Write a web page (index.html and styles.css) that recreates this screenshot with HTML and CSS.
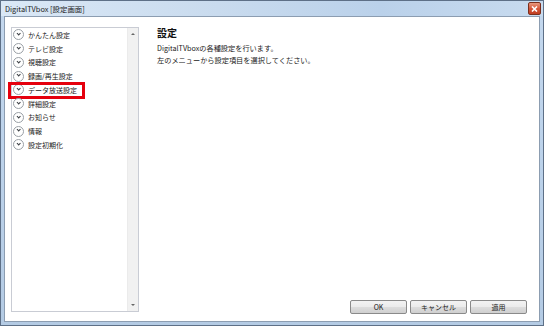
FILE: index.html
```html
<!DOCTYPE html>
<html lang="ja">
<head>
  <meta charset="UTF-8">
  <title>DigitalTVbox [設定画面]</title>
  <link rel="stylesheet" href="styles.css">
</head>
<body>
  <div class="window">
    <div class="titlebar">
      <span class="titlebar__text">DigitalTVbox [設定画面]</span>
      <button class="titlebar__close" aria-label="閉じる">
        <svg width="7" height="6" viewBox="0 0 7 6"><path d="M1 0.5 L6 5.5 M6 0.5 L1 5.5" stroke="#fff" stroke-width="1.6"/></svg>
      </button>
    </div>
    <div class="client">
      <div class="menu">
        <ul class="menu__list">
          <li class="menu__item"><span class="chev"></span>かんたん設定</li>
          <li class="menu__item"><span class="chev"></span>テレビ設定</li>
          <li class="menu__item"><span class="chev"></span>視聴設定</li>
          <li class="menu__item"><span class="chev"></span>録画/再生設定</li>
          <li class="menu__item menu__item--marked"><span class="chev"></span>データ放送設定<span class="mark"></span></li>
          <li class="menu__item"><span class="chev"></span>詳細設定</li>
          <li class="menu__item"><span class="chev"></span>お知らせ</li>
          <li class="menu__item"><span class="chev"></span>情報</li>
          <li class="menu__item"><span class="chev"></span>設定初期化</li>
        </ul>
        <div class="scrollbar">
          <span class="scrollbar__up"></span>
          <span class="scrollbar__down"></span>
        </div>
      </div>
      <div class="content">
        <h1 class="content__title">設定</h1>
        <p class="content__text">DigitalTVboxの各種設定を行います。<br>左のメニューから設定項目を選択してください。</p>
        <div class="actions">
          <button class="btn">OK</button>
          <button class="btn">キャンセル</button>
          <button class="btn btn--apply">適用</button>
        </div>
      </div>
    </div>
  </div>
</body>
</html>
```
FILE: styles.css
```css
html, body {
  margin: 0;
  padding: 0;
}

body {
  width: 544px;
  height: 326px;
  font-family: "Noto Sans CJK JP", "Noto Sans", sans-serif;
  font-size: 7px;
  color: #1a1a1a;
  overflow: hidden;
}

.window {
  box-sizing: border-box;
  width: 544px;
  height: 326px;
  display: flex;
  flex-direction: column;
  border: 1px solid #5e7087;
  background: linear-gradient(180deg, #c4d8ee 0%, #bcd2ea 50%, #b4cbe4 100%);
}

.titlebar {
  height: 15px;
  display: flex;
  align-items: center;
  padding: 0 2px 0 4px;
  background: linear-gradient(90deg, #dae8f6 0%, #c9dbee 40%, #bad1ea 70%, #c8dbef 100%);
}

.titlebar__text {
  flex: 1;
  font-size: 7.4px;
  color: #1d1d1d;
  line-height: 15px;
}

.titlebar__close {
  box-sizing: border-box;
  width: 13px;
  height: 13px;
  padding: 0;
  border: 1px solid #7b2f1d;
  border-radius: 2px;
  background: linear-gradient(180deg, #e89a80 0%, #d5573a 50%, #c03e22 100%);
  display: flex;
  align-items: center;
  justify-content: center;
}

.client {
  flex: 1;
  margin: 0 3px 3px 3px;
  border: 1px solid #8c9db1;
  background: #fff;
  display: grid;
  grid-template-columns: 128px 1fr;
  column-gap: 18px;
  padding: 10px 12px 7px 6px;
}

.menu {
  box-sizing: border-box;
  height: 285px;
  border: 1px solid #c9ccd4;
  display: flex;
  position: relative;
}

.menu__list {
  flex: 1;
  list-style: none;
  margin: 0;
  padding: 0;
}

.menu__item {
  position: relative;
  height: 13.75px;
  display: flex;
  align-items: center;
  gap: 4px;
  padding-left: 1px;
  white-space: nowrap;
}

.chev {
  box-sizing: border-box;
  width: 11px;
  height: 11px;
  border: 1px solid #9aa0a6;
  border-radius: 50%;
  background: #fff;
  position: relative;
  flex: none;
}

.chev::after {
  content: "";
  position: absolute;
  left: 2.7px;
  top: 1.7px;
  width: 2.4px;
  height: 2.4px;
  border-right: 1.2px solid #3b3f44;
  border-bottom: 1.2px solid #3b3f44;
  transform: rotate(45deg);
}

.mark {
  position: absolute;
  left: -4px;
  top: -1px;
  width: 77px;
  height: 17px;
  box-sizing: border-box;
  border: 3px solid #e5000d;
}

.scrollbar {
  width: 10px;
  background: #f1f1f1;
  border-left: 1px solid #ebebeb;
  position: relative;
}

.scrollbar__up,
.scrollbar__down {
  position: absolute;
  left: 3px;
  width: 0;
  height: 0;
  border-left: 2px solid transparent;
  border-right: 2px solid transparent;
}

.scrollbar__up {
  top: 5px;
  border-bottom: 2px solid #666;
}

.scrollbar__down {
  bottom: 5px;
  border-top: 2px solid #666;
}

.content {
  display: flex;
  flex-direction: column;
}

.content__title {
  margin: 0;
  font-size: 10px;
  font-weight: 700;
  line-height: 12px;
  color: #111;
}

.content__text {
  margin: 3px 0 0 0;
  font-size: 7.2px;
  line-height: 12px;
  color: #222;
}

.actions {
  margin-top: auto;
  display: flex;
  justify-content: flex-end;
  gap: 3px;
}

.btn {
  box-sizing: border-box;
  width: 57px;
  height: 14px;
  padding: 0;
  font-family: inherit;
  font-size: 7px;
  color: #1a1a1a;
  border: 1px solid #8a8a8a;
  border-radius: 2px;
  background: linear-gradient(180deg, #f3f3f3 0%, #ebebeb 48%, #dddddd 52%, #cfcfcf 100%);
}
```
